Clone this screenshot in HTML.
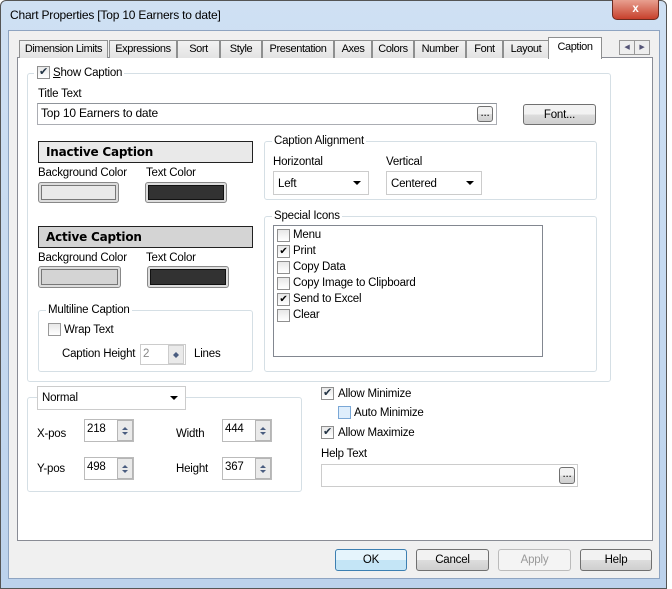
<!DOCTYPE html><html><head><style>
*{box-sizing:border-box;margin:0;padding:0}
body{width:672px;height:589px;overflow:hidden;background:#fff;font-family:"Liberation Sans",sans-serif;font-size:11.5px;letter-spacing:-0.2px;color:#000;position:relative}
.a{position:absolute}
.t{position:absolute;white-space:nowrap;line-height:14px}
.grp{position:absolute;border:1px solid #d5dfe5;border-radius:3px}
.lbl{position:absolute;background:#fff;padding:0 2px;top:-8px;left:7px;white-space:nowrap;line-height:14px}
.in{position:absolute;background:#fff;border:1px solid #abadb3;border-top-color:#8f949a}
.cb{position:absolute;width:13px;height:13px;border:1px solid #8f8f8f;background:linear-gradient(#e8e8e8,#fff)}
.btn{position:absolute;border:1px solid #707070;border-radius:3px;background:linear-gradient(#f2f2f2 50%,#dddddd 50%,#cfcfcf);text-align:center;line-height:20px}
.tab{position:absolute;top:40px;height:18px;border:1px solid #8e8f8f;border-bottom:none;background:linear-gradient(#f2f2f2,#e3e3e3);text-align:center;line-height:16px;white-space:nowrap;font-size:11px;letter-spacing:-0.4px;overflow:hidden}
.sel::after{content:"";position:absolute;right:7px;top:9px;border:4px solid transparent;border-top:4px solid #000}
.sp{position:absolute;width:16px;border:1px solid #b5b5b5;background:#eaeaea}
.sp::before{content:"";position:absolute;left:4px;top:3px;border:3px solid transparent;border-bottom:3px solid #4a5d80}
.sp::after{content:"";position:absolute;left:4px;bottom:2px;border:3px solid transparent;border-top:3px solid #4a5d80}
</style></head><body>
<div class="a" style="left:0;top:0;width:667px;height:589px;background:linear-gradient(#cfe0f3,#bcd2ec);border:1px solid #555;border-radius:6px 6px 0 0"></div>
<div class="t" style="left:10px;top:8px;font-size:12px">Chart Properties [Top 10 Earners to date]</div>
<div class="a" style="left:612px;top:0;width:47px;height:20px;background:linear-gradient(#e8a090,#c7402c);border:1px solid #6d2b20;border-top:none;border-radius:0 0 5px 5px;color:#fff;font-weight:bold;text-align:center;line-height:18px">x</div>
<div class="a" style="left:8px;top:30px;width:652px;height:549px;background:#f0f0f0;border:1px solid #8ea4c1"></div>
<div class="a" style="left:17px;top:57px;width:636px;height:484px;background:#fff;border:1px solid #898c95"></div>
<div class="tab" style="left:19px;width:89px">Dimension Limits</div>
<div class="tab" style="left:109px;width:68px">Expressions</div>
<div class="tab" style="left:177px;width:43px">Sort</div>
<div class="tab" style="left:220px;width:42px">Style</div>
<div class="tab" style="left:262px;width:72px">Presentation</div>
<div class="tab" style="left:334px;width:38px">Axes</div>
<div class="tab" style="left:372px;width:42px">Colors</div>
<div class="tab" style="left:414px;width:52px">Number</div>
<div class="tab" style="left:466px;width:37px">Font</div>
<div class="tab" style="left:503px;width:46px">Layout</div>
<div class="tab" style="left:548px;top:37px;height:22px;width:54px;background:#fff;line-height:18px">Caption</div>
<div class="a" style="left:619px;top:40px;width:16px;height:15px;border:1px solid #999;background:#eee;font-size:7px;text-align:center;line-height:13px;color:#557">◀</div>
<div class="a" style="left:634px;top:40px;width:16px;height:15px;border:1px solid #999;background:#eee;font-size:7px;text-align:center;line-height:13px;color:#557">▶</div>

<div class="grp" style="left:27px;top:73px;width:584px;height:309px"></div>
<div class="a" style="left:34px;top:66px;width:90px;height:14px;background:#fff"></div>
<div class="cb" style="left:37px;top:66px;font-size:11px;line-height:11px;text-align:center;color:#234">✔</div>
<div class="t" style="left:53px;top:66px"><u>S</u>how Caption</div>
<div class="t" style="left:38px;top:87px">Title Text</div>
<div class="in" style="left:37px;top:103px;width:460px;height:22px"></div>
<div class="t" style="left:41px;top:106px;font-size:12px">Top 10 Earners to date</div>
<div class="btn" style="left:477px;top:106px;width:16px;height:16px;line-height:12px">...</div>
<div class="btn" style="left:523px;top:104px;width:73px;height:21px">Font...</div>

<div class="a" style="left:38px;top:141px;width:215px;height:22px;background:#e9e9e9;border:1px solid #222;font-weight:bold;padding-left:7px;line-height:20px;font-family:'DejaVu Sans',sans-serif;font-size:12px">Inactive Caption</div>
<div class="t" style="left:38px;top:166px">Background Color</div>
<div class="t" style="left:146px;top:166px">Text Color</div>
<div class="a" style="left:38px;top:182px;width:81px;height:21px;border:1px solid #888;border-radius:3px;padding:2px;background:#ddd"><div style="width:100%;height:100%;background:#e9e9e9;border:1px solid #777"></div></div>
<div class="a" style="left:145px;top:182px;width:82px;height:21px;border:1px solid #888;border-radius:3px;padding:2px;background:#ddd"><div style="width:100%;height:100%;background:#323232;border:1px solid #111"></div></div>
<div class="a" style="left:38px;top:226px;width:215px;height:22px;background:#d4d4d4;border:1px solid #222;font-weight:bold;padding-left:7px;line-height:20px;font-family:'DejaVu Sans',sans-serif;font-size:12px">Active Caption</div>
<div class="t" style="left:38px;top:251px">Background Color</div>
<div class="t" style="left:146px;top:251px">Text Color</div>
<div class="a" style="left:38px;top:266px;width:83px;height:22px;border:1px solid #888;border-radius:3px;padding:2px;background:#ddd"><div style="width:100%;height:100%;background:#d4d4d4;border:1px solid #777"></div></div>
<div class="a" style="left:147px;top:266px;width:82px;height:22px;border:1px solid #888;border-radius:3px;padding:2px;background:#ddd"><div style="width:100%;height:100%;background:#323232;border:1px solid #111"></div></div>

<div class="grp" style="left:38px;top:310px;width:215px;height:62px"><div class="lbl">Multiline Caption</div></div>
<div class="cb" style="left:48px;top:323px;border-color:#999"></div>
<div class="t" style="left:64px;top:323px">Wrap Text</div>
<div class="t" style="left:62px;top:347px">Caption Height</div>
<div class="in" style="left:140px;top:344px;width:46px;height:21px;border-color:#ccc"></div>
<div class="t" style="left:143px;top:347px;color:#888">2</div>
<div class="sp" style="left:168px;top:345px;height:19px;border-color:#ccc"></div>
<div class="t" style="left:194px;top:347px">Lines</div>

<div class="grp" style="left:264px;top:141px;width:333px;height:59px"><div class="lbl">Caption Alignment</div></div>
<div class="t" style="left:273px;top:155px">Horizontal</div>
<div class="t" style="left:386px;top:155px">Vertical</div>
<div class="in sel" style="left:273px;top:171px;width:96px;height:24px;border-color:#ccc"><span class="t" style="left:4px;top:5px">Left</span></div>
<div class="in sel" style="left:386px;top:171px;width:96px;height:24px;border-color:#ccc"><span class="t" style="left:4px;top:5px">Centered</span></div>

<div class="grp" style="left:264px;top:216px;width:333px;height:156px"><div class="lbl">Special Icons</div></div>
<div class="in" style="left:273px;top:225px;width:270px;height:132px;border-color:#828790"></div>
<div class="cb" style="left:277px;top:229px"></div><div class="t" style="left:293px;top:228px">Menu</div>
<div class="cb" style="left:277px;top:245px;font-size:10px;line-height:11px;text-align:center">✔</div><div class="t" style="left:293px;top:244px">Print</div>
<div class="cb" style="left:277px;top:261px"></div><div class="t" style="left:293px;top:260px">Copy Data</div>
<div class="cb" style="left:277px;top:277px"></div><div class="t" style="left:293px;top:276px">Copy Image to Clipboard</div>
<div class="cb" style="left:277px;top:293px;font-size:10px;line-height:11px;text-align:center">✔</div><div class="t" style="left:293px;top:292px">Send to Excel</div>
<div class="cb" style="left:277px;top:309px"></div><div class="t" style="left:293px;top:308px">Clear</div>

<div class="grp" style="left:27px;top:397px;width:275px;height:95px"></div>
<div class="in sel" style="left:37px;top:386px;width:149px;height:24px;border-color:#ccc"><span class="t" style="left:4px;top:4px">Normal</span></div>
<div class="t" style="left:37px;top:427px">X-pos</div>
<div class="in" style="left:84px;top:419px;width:50px;height:23px;border-color:#bbb"><span class="t" style="left:2px;top:2px">218</span></div>
<div class="sp" style="left:117px;top:420px;height:21px"></div>
<div class="t" style="left:176px;top:427px">Width</div>
<div class="in" style="left:222px;top:419px;width:50px;height:23px;border-color:#bbb"><span class="t" style="left:2px;top:2px">444</span></div>
<div class="sp" style="left:255px;top:420px;height:21px"></div>
<div class="t" style="left:37px;top:462px">Y-pos</div>
<div class="in" style="left:84px;top:457px;width:50px;height:23px;border-color:#bbb"><span class="t" style="left:2px;top:2px">498</span></div>
<div class="sp" style="left:117px;top:458px;height:21px"></div>
<div class="t" style="left:176px;top:462px">Height</div>
<div class="in" style="left:222px;top:457px;width:50px;height:23px;border-color:#bbb"><span class="t" style="left:2px;top:2px">367</span></div>
<div class="sp" style="left:255px;top:458px;height:21px"></div>

<div class="cb" style="left:321px;top:387px;font-size:11px;line-height:11px;text-align:center;color:#234">✔</div><div class="t" style="left:338px;top:387px">Allow Minimize</div>
<div class="cb" style="left:338px;top:406px;border-color:#7aa7d6;background:#dfeefc"></div><div class="t" style="left:354px;top:406px">Auto Minimize</div>
<div class="cb" style="left:321px;top:426px;font-size:11px;line-height:11px;text-align:center;color:#234">✔</div><div class="t" style="left:338px;top:426px">Allow Maximize</div>
<div class="t" style="left:321px;top:447px">Help Text</div>
<div class="in" style="left:321px;top:464px;width:257px;height:23px;border-color:#ccc"></div>
<div class="btn" style="left:559px;top:467px;width:16px;height:17px;line-height:12px">...</div>

<div class="btn" style="left:335px;top:549px;width:72px;height:22px;border-color:#3c7fb1;background:linear-gradient(#e5f4fc 50%,#c4e5f6 50%)">OK</div>
<div class="btn" style="left:416px;top:549px;width:73px;height:22px">Cancel</div>
<div class="btn" style="left:498px;top:549px;width:73px;height:22px;border-color:#bbb;background:#f4f4f4;color:#999">Apply</div>
<div class="btn" style="left:580px;top:549px;width:72px;height:22px">Help</div>
</body></html>
